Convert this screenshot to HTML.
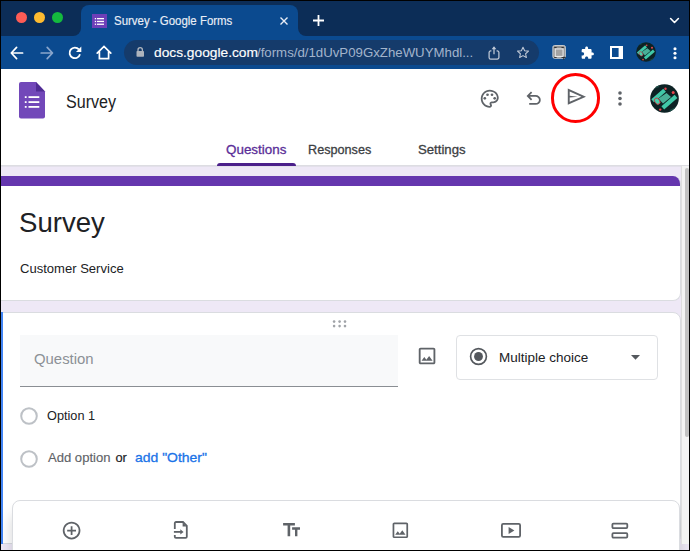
<!DOCTYPE html>
<html><head><meta charset="utf-8">
<style>
*{box-sizing:border-box;margin:0;padding:0}
html,body{width:690px;height:551px;overflow:hidden;background:#000;font-family:"Liberation Sans",sans-serif}
.a{position:absolute}
.t{position:absolute;white-space:nowrap;line-height:1}
svg{position:absolute;overflow:visible}
</style></head><body>
<svg width="0" height="0" style="position:absolute"><defs><symbol id="av" viewBox="0 0 29 29"><clipPath id="avc"><circle cx="14.5" cy="14.5" r="14.3"/></clipPath><g clip-path="url(#avc)"><rect width="29" height="29" fill="#0d2224"/><path d="M3 4L9 2M20 27L26 24" stroke="#1b4a45" stroke-width="2"/><path d="M8.5 14.5L16.5 9L21 13L13 19.5Z" fill="#55c9ad" opacity=".85"/><path d="M2.6 16.8L14.6 6.3" stroke="#40c8a8" stroke-width="4"/><path d="M12.8 23.8L26 12.4" stroke="#40c8a8" stroke-width="4.2"/><ellipse cx="7.2" cy="17.2" rx="2.4" ry="3.4" transform="rotate(-35 7.2 17.2)" fill="#48d0ae" stroke="#c8404a" stroke-width="0.9"/><circle cx="15.5" cy="4.8" r="1.2" fill="#e8454c"/><circle cx="23.2" cy="8.4" r="1.5" fill="#e8454c"/><circle cx="10.2" cy="25.6" r="1.2" fill="#e8454c"/></g></symbol></defs></svg>
<!-- titlebar -->
<div class="a" style="left:1px;top:1px;width:688px;height:35px;background:#0c2d57"></div>
<div class="a" style="left:16.1px;top:11.8px;width:11px;height:11px;border-radius:50%;background:#fd5c56"></div>
<div class="a" style="left:34.2px;top:11.8px;width:11px;height:11px;border-radius:50%;background:#febb30"></div>
<div class="a" style="left:52.2px;top:11.8px;width:11px;height:11px;border-radius:50%;background:#14ba3e"></div>
<!-- active tab -->
<div class="a" style="left:81px;top:5px;width:217px;height:31px;background:#0b4a8f;border-radius:8px 8px 0 0"></div>
<div class="a" style="left:73px;top:28px;width:8px;height:8px;background:#0b4a8f"></div>
<div class="a" style="left:73px;top:20px;width:8px;height:16px;background:#0c2d57;border-radius:0 0 8px 0"></div>
<div class="a" style="left:298px;top:28px;width:8px;height:8px;background:#0b4a8f"></div>
<div class="a" style="left:298px;top:20px;width:8px;height:16px;background:#0c2d57;border-radius:0 0 0 8px"></div>
<div class="a" style="left:92px;top:13.5px;width:15px;height:14.5px;background:#6e3fb8"></div>
<svg style="left:92px;top:13.5px" width="15" height="15" viewBox="0 0 15 15"><g fill="#fff"><rect x="2.8" y="4" width="1.3" height="1.3"/><rect x="5" y="4" width="7" height="1.3"/><rect x="2.8" y="6.8" width="1.3" height="1.3"/><rect x="5" y="6.8" width="7" height="1.3"/><rect x="2.8" y="9.6" width="1.3" height="1.3"/><rect x="5" y="9.6" width="7" height="1.3"/></g></svg>
<div class="t" style="left:113.5px;top:14.7px;font-size:12.15px;color:#e9eef6;transform:scaleX(0.943);transform-origin:0 0;-webkit-text-stroke:0.15px #e9eef6">Survey - Google Forms</div>
<svg style="left:280px;top:17px" width="8" height="8" viewBox="0 0 8 8"><path d="M0.5 0.5L7.5 7.5M7.5 0.5L0.5 7.5" stroke="#e9eef6" stroke-width="1.4"/></svg>
<svg style="left:313px;top:15px" width="11" height="11" viewBox="0 0 11 11"><path d="M5.5 0V11M0 5.5H11" stroke="#fff" stroke-width="1.8"/></svg>
<svg style="left:669px;top:16px" width="11" height="9" viewBox="0 0 11 9"><path d="M1.6 2.5L5.5 6.5L9.4 2.5" stroke="#fff" stroke-width="1.6" fill="none" stroke-linecap="round" stroke-linejoin="round"/></svg>
<!-- toolbar -->
<div class="a" style="left:1px;top:36px;width:688px;height:34px;background:#0b4a8f"></div>
<svg style="left:10px;top:45.5px" width="14" height="14" viewBox="0 0 14 14"><path d="M12.6 7H1.6M6.6 1.4L1.3 7L6.6 12.6" stroke="#fff" stroke-width="1.7" fill="none" stroke-linecap="round" stroke-linejoin="round"/></svg>
<svg style="left:39.5px;top:45.5px" width="14" height="14" viewBox="0 0 14 14"><path d="M1.2 7H12.2M7.2 1.4L12.5 7L7.2 12.6" stroke="#8aa6cc" stroke-width="1.7" fill="none" stroke-linecap="round" stroke-linejoin="round"/></svg>
<svg style="left:68px;top:45.5px" width="14" height="14" viewBox="0 0 14 14"><path d="M12 8.3A5.3 5.3 0 1 1 10.9 3.4" stroke="#fff" stroke-width="1.8" fill="none"/><path d="M13.3 0.6V5.9H8z" fill="#fff"/></svg>
<svg style="left:96px;top:45px" width="16" height="15" viewBox="0 0 16 15"><path d="M1.2 8.2L8 1.5L14.8 8.2M3.4 6.6V13.6H12.6V6.6" stroke="#fff" stroke-width="1.7" fill="none" stroke-linecap="round" stroke-linejoin="miter"/></svg>
<div class="a" style="left:124px;top:40px;width:415px;height:25px;border-radius:13px;background:#153b6b"></div>
<svg style="left:136px;top:47px" width="9" height="10" viewBox="0 0 9 10"><path d="M2 4.4V2.9A2.2 2.2 0 0 1 6.4 2.9V4.4" stroke="#aeb4bd" stroke-width="1.3" fill="none"/><rect x="0.5" y="3.9" width="7.5" height="5.8" rx="0.8" fill="#aeb4bd"/></svg>
<div class="t" style="left:154.05px;top:45.6px;font-size:13px;color:#fff;transform:scaleX(1.058);transform-origin:0 0;-webkit-text-stroke:0.15px #fff">docs.google.com</div>
<div class="t" style="left:257.2px;top:45.6px;font-size:13px;color:#a3b4cb;transform:scaleX(1.018);transform-origin:0 0">/forms/d/1dUvP09GxZheWUYMhdl...</div>
<svg style="left:488px;top:45px" width="12" height="15" viewBox="0 0 12 15"><path d="M3.4 5.9H2.7A1.6 1.6 0 0 0 1.1 7.5V12.4A1.6 1.6 0 0 0 2.7 14H9.3A1.6 1.6 0 0 0 10.9 12.4V7.5A1.6 1.6 0 0 0 9.3 5.9H8.6" stroke="#bfc8d6" stroke-width="1.25" fill="none"/><path d="M6 9.2V2.6" stroke="#bfc8d6" stroke-width="1.25"/><path d="M3.6 4.2L6 1.3L8.4 4.2z" fill="#bfc8d6"/></svg>
<svg style="left:516px;top:46px" width="14" height="13" viewBox="0 0 24 23"><path d="M12 2.2l2.9 6.2 6.8.7-5.1 4.6 1.4 6.7L12 17l-6 3.4 1.4-6.7L2.3 9.1l6.8-.7z" stroke="#bfc8d6" stroke-width="1.9" fill="none" stroke-linejoin="round"/></svg>
<!-- extensions -->
<svg style="left:551px;top:44px" width="16" height="17" viewBox="0 0 16 17"><rect x="1.9" y="1.6" width="12.4" height="12.6" rx="1.5" fill="#8c8c8c" stroke="#d5d5d5" stroke-width="1"/><g fill="#2a2a2a"><rect x="3.2" y="3" width="2.4" height="0.9"/><rect x="10.5" y="3" width="2.3" height="0.9"/><rect x="3.2" y="13.1" width="2.4" height="0.9"/><rect x="10.5" y="13.1" width="4.2" height="0.9"/><rect x="12.3" y="12.3" width="0.9" height="3.5"/></g><rect x="4.2" y="4.9" width="7.9" height="7.5" fill="#a3a3a3" stroke="#f2f2f2" stroke-width="1"/></svg>
<svg style="left:580px;top:45.5px" width="15" height="14" viewBox="0 0 24 24"><path d="M20.5 11H19V7c0-1.1-.9-2-2-2h-4V3.5C13 2.12 11.88 1 10.5 1S8 2.12 8 3.5V5H4c-1.1 0-1.99.9-1.99 2v3.8H3.5c1.49 0 2.7 1.21 2.7 2.7s-1.21 2.7-2.7 2.7H2V20c0 1.1.9 2 2 2h3.8v-1.5c0-1.49 1.21-2.7 2.7-2.7 1.49 0 2.7 1.21 2.7 2.7V22H17c1.1 0 2-.9 2-2v-4h1.5c1.38 0 2.5-1.12 2.5-2.5S21.88 11 20.5 11z" fill="#fff"/></svg>
<svg style="left:610px;top:46px" width="13" height="13" viewBox="0 0 13 13"><rect x="1" y="1" width="11" height="11" stroke="#fff" stroke-width="2" fill="none"/><rect x="8.6" y="1" width="3.4" height="11" fill="#fff"/></svg>
<svg style="left:636px;top:42.3px" width="20" height="20" viewBox="0 0 29 29"><use href="#av"/></svg>
<svg style="left:673px;top:46.5px" width="4" height="13" viewBox="0 0 4 13"><circle cx="2" cy="1.8" r="1.55" fill="#fff"/><circle cx="2" cy="6.3" r="1.55" fill="#fff"/><circle cx="2" cy="10.8" r="1.55" fill="#fff"/></svg>
<!-- page -->
<div class="a" style="left:1px;top:69px;width:688px;height:481px;background:#eee8f6;overflow:hidden">
 <!-- header -->
 <div class="a" style="left:0;top:0;width:688px;height:97px;background:#fff;border-bottom:1px solid #dddde2;box-shadow:0 1px 0 #e3e0ea"></div>
</div>
<!-- forms icon -->
<svg style="left:18.7px;top:82px" width="26" height="36.5" viewBox="0 0 26 36.5"><path d="M2 0H17L26 9.5V34.5A2 2 0 0 1 24 36.5H2A2 2 0 0 1 0 34.5V2A2 2 0 0 1 2 0z" fill="#7248b9"/><path d="M17 0L26 9.5H17z" fill="#4f2c93"/><g fill="#fff"><rect x="5.8" y="14.2" width="1.8" height="1.8"/><rect x="9.5" y="14.2" width="10.8" height="1.8"/><rect x="5.8" y="19.2" width="1.8" height="1.8"/><rect x="9.5" y="19.2" width="10.8" height="1.8"/><rect x="5.8" y="24" width="1.8" height="1.8"/><rect x="9.5" y="24" width="10.8" height="1.8"/></g></svg>
<div class="t" style="left:65.9px;top:94.1px;font-size:17.46px;color:#202124;transform:scaleX(0.923);transform-origin:0 0">Survey</div>
<!-- header right icons -->
<svg style="left:479.3px;top:87.7px" width="21.5" height="21.5" viewBox="0 0 24 24"><path d="M12 22C6.49 22 2 17.51 2 12S6.49 2 12 2s10 4.04 10 9c0 3.31-2.69 6-6 6h-1.77c-.28 0-.5.22-.5.5 0 .12.05.23.13.33.41.47.64 1.06.64 1.67 0 1.38-1.12 2.5-2.5 2.5zm0-18c-4.41 0-8 3.59-8 8s3.59 8 8 8c.28 0 .5-.22.5-.5 0-.16-.08-.28-.14-.35-.41-.46-.63-1.05-.63-1.65 0-1.38 1.12-2.5 2.5-2.5H16c2.21 0 4-1.79 4-4 0-3.86-3.59-7-8-7z" fill="#5f6368"/><circle cx="6.5" cy="11.5" r="1.5" fill="#5f6368"/><circle cx="9.5" cy="7.5" r="1.5" fill="#5f6368"/><circle cx="14.5" cy="7.5" r="1.5" fill="#5f6368"/><circle cx="17.5" cy="11.5" r="1.5" fill="#5f6368"/></svg>
<svg style="left:523.05px;top:87.85px" width="21.3" height="21.3" viewBox="0 -960 960 960"><path d="M280-200v-80h284q63 0 109.5-40T720-420q0-60-46.5-100T564-560H312l104 104-56 56-200-200 200-200 56 56-104 104h252q97 0 166.5 63T800-420q0 94-69.5 157T564-200H280Z" fill="#5f6368"/></svg>
<svg style="left:566px;top:86px" width="22" height="22" viewBox="0 0 22 22"><path d="M1.8 2.5L20 10.65L1.8 18.8Z M3.7 5.43L15.43 10.65L3.7 15.87Z M3.7 9.8L11.8 10.65L3.7 11.5Z" fill="#5f6368" fill-rule="evenodd"/></svg>
<div class="a" style="left:550.5px;top:73.2px;width:49.5px;height:49.5px;border-radius:50%;border:3.2px solid #f00"></div>
<svg style="left:618px;top:91px" width="4" height="15" viewBox="0 0 4 15"><circle cx="2" cy="2" r="1.8" fill="#5f6368"/><circle cx="2" cy="7.5" r="1.8" fill="#5f6368"/><circle cx="2" cy="13" r="1.8" fill="#5f6368"/></svg>
<svg style="left:649.5px;top:84px" width="29" height="29" viewBox="0 0 29 29"><use href="#av"/></svg>
<!-- tabs -->
<div class="t" style="left:226.1px;top:143px;font-size:13.13px;color:#5a2e98;transform:scaleX(1.021);transform-origin:0 0;-webkit-text-stroke:0.3px #5a2e98">Questions</div>
<div class="a" style="left:217px;top:162.8px;width:79px;height:3px;background:#4b1f8a;border-radius:3px 3px 0 0"></div>
<div class="t" style="left:308.2px;top:143px;font-size:13.13px;color:#3c4043;transform:scaleX(0.963);transform-origin:0 0;-webkit-text-stroke:0.3px #3c4043">Responses</div>
<div class="t" style="left:417.8px;top:143px;font-size:13.13px;color:#3c4043;transform:scaleX(1.003);transform-origin:0 0;-webkit-text-stroke:0.3px #3c4043">Settings</div>
<!-- title card -->
<div class="a" style="left:-9px;top:176px;width:690px;height:125px;background:#fff;border:1px solid #dadce0;border-top:0;border-radius:8px;overflow:hidden">
 <div class="a" style="left:-1px;top:0;width:692px;height:9.5px;background:#6536ae"></div>
</div>
<div class="t" style="left:19.4px;top:209px;font-size:27.93px;color:#202124;transform:scaleX(0.987);transform-origin:0 0">Survey</div>
<div class="t" style="left:19.75px;top:262.05px;font-size:13.41px;color:#202124;transform:scaleX(0.973);transform-origin:0 0">Customer Service</div>
<!-- question card -->
<div class="a" style="left:-9px;top:312px;width:690px;height:232px;background:#fff;border:1px solid #dadce0;border-radius:8px"></div>
<div class="a" style="left:1px;top:312px;width:2px;height:232px;background:#4285f4"></div>
<svg style="left:332px;top:320px" width="15" height="8" viewBox="0 0 15 8"><g fill="#a0a3a8"><circle cx="2.1" cy="1.6" r="1.3"/><circle cx="7.6" cy="1.6" r="1.3"/><circle cx="13" cy="1.6" r="1.3"/><circle cx="2.1" cy="6.1" r="1.3"/><circle cx="7.6" cy="6.1" r="1.3"/><circle cx="13" cy="6.1" r="1.3"/></g></svg>
<div class="a" style="left:20px;top:334.5px;width:378px;height:52.3px;background:#f8f9fa;border-bottom:1px solid #8a8e93"></div>
<div class="t" style="left:33.95px;top:352px;font-size:14.53px;color:#8c9196;transform:scaleX(1.026);transform-origin:0 0">Question</div>
<svg style="left:415.8px;top:345.2px" width="22.1" height="22.1" viewBox="0 -960 960 960"><path d="M200-120q-33 0-56.5-23.5T120-200v-560q0-33 23.5-56.5T200-840h560q33 0 56.5 23.5T840-760v560q0 33-23.5 56.5T760-120H200Zm0-80h560v-560H200v560Zm40-80h480L570-480 450-320l-90-120-120 160Zm-40 80v-560 560Z" fill="#5f6368"/></svg>
<div class="a" style="left:456px;top:335px;width:201.5px;height:45px;border:1px solid #dfe1e4;border-radius:4px"></div>
<svg style="left:468.8px;top:346.6px" width="19" height="19" viewBox="0 0 24 24"><circle cx="12" cy="12" r="10" stroke="#54585d" stroke-width="2.1" fill="none"/><circle cx="12" cy="12" r="5.6" fill="#54585d"/></svg>
<div class="t" style="left:499.3px;top:350.65px;font-size:13.41px;color:#202124;transform:scaleX(1.007);transform-origin:0 0">Multiple choice</div>
<svg style="left:631.4px;top:355px" width="9" height="5" viewBox="0 0 9 5"><path d="M0 0H9L4.5 4.8z" fill="#54585d"/></svg>
<svg style="left:20px;top:406.5px" width="18" height="18" viewBox="0 0 18 18"><circle cx="9" cy="9" r="7.8" stroke="#bdc1c6" stroke-width="2" fill="none"/></svg>
<div class="t" style="left:46.76px;top:409px;font-size:13.7px;color:#202124;transform:scaleX(0.930);transform-origin:0 0">Option 1</div>
<svg style="left:20px;top:449.5px" width="18" height="18" viewBox="0 0 18 18"><circle cx="9" cy="9" r="7.8" stroke="#bdc1c6" stroke-width="2" fill="none"/></svg>
<div class="t" style="left:47.5px;top:452px;font-size:12.85px;color:#5f6368;transform:scaleX(1.017);transform-origin:0 0;-webkit-text-stroke:0.15px #5f6368">Add option</div>
<div class="t" style="left:115.4px;top:452px;font-size:12.85px;color:#202124;transform:scaleX(1.0);transform-origin:0 0;-webkit-text-stroke:0.2px #202124">or</div>
<div class="t" style="left:134.8px;top:451px;font-size:13.1px;color:#1a73e8;transform:scaleX(1.065);transform-origin:0 0;-webkit-text-stroke:0.3px #1a73e8">add "Other"</div>
<!-- bottom toolbar card -->
<div class="a" style="left:12px;top:500px;width:668px;height:60px;background:#fff;border:1px solid #dadce0;border-radius:8px;box-shadow:0 14px 14px rgba(60,64,67,.22)"></div>
<svg style="left:60.8px;top:519.5px" width="21.2" height="21.2" viewBox="0 -960 960 960"><path d="M440-280h80v-160h160v-80H520v-160h-80v160H280v80h160v160Zm40 200q-83 0-156-31.5T197-197q-54-54-85.5-127T80-480q0-83 31.5-156T197-763q54-54 127-85.5T480-880q83 0 156 31.5T763-763q54 54 85.5 127T880-480q0 83-31.5 156T763-197q-54 54-127 85.5T480-80Zm0-80q134 0 227-93t93-227q0-134-93-227t-227-93q-134 0-227 93t-93 227q0 134 93 227t227 93Zm0-320Z" fill="#5f6368"/></svg>
<svg style="left:172px;top:520px" width="18" height="20" viewBox="0 0 18 20"><path d="M2.8 8.9V3.2A1.2 1.2 0 0 1 4 2H11L14.8 5.8V16.7A1.2 1.2 0 0 1 13.6 17.9H4A1.2 1.2 0 0 1 2.8 16.7V15" stroke="#5f6368" stroke-width="1.8" fill="none"/><path d="M10.6 2.5V6.6H14.6z" fill="#5f6368"/><path d="M1.9 11.9H9" stroke="#5f6368" stroke-width="1.8"/><path d="M8.3 9.2L11.6 11.9L8.3 14.6z" fill="#5f6368"/></svg>
<svg style="left:282px;top:522px" width="19" height="15" viewBox="0 0 19 15"><path d="M1.1 1.1H12.9V3.6H8.2V14.2H5.6V3.6H1.1z M10.1 5.2H18V7.8H15.4V14.2H13V7.8H10.1z" fill="#5f6368"/></svg>
<svg style="left:390.4px;top:519.8px" width="20.7" height="20.7" viewBox="0 -960 960 960"><path d="M200-120q-33 0-56.5-23.5T120-200v-560q0-33 23.5-56.5T200-840h560q33 0 56.5 23.5T840-760v560q0 33-23.5 56.5T760-120H200Zm0-80h560v-560H200v560Zm40-80h480L570-480 450-320l-90-120-120 160Zm-40 80v-560 560Z" fill="#5f6368"/></svg>
<svg style="left:501px;top:522.5px" width="20" height="15" viewBox="0 0 20 15"><rect x="0.9" y="0.9" width="18.2" height="13" rx="1.3" stroke="#5f6368" stroke-width="1.8" fill="none"/><path d="M7.6 4V11L13.4 7.5z" fill="#5f6368"/></svg>
<svg style="left:611px;top:521.5px" width="18" height="17" viewBox="0 0 18 17"><rect x="1.4" y="1.6" width="14.9" height="4.5" rx="1" stroke="#5f6368" stroke-width="1.8" fill="none"/><rect x="1.4" y="11.2" width="14.9" height="4.4" rx="1" stroke="#5f6368" stroke-width="1.8" fill="none"/></svg>
<!-- scrollbar -->
<div class="a" style="left:680.5px;top:166px;width:8.5px;height:378px;background:#f3f3f3;border-left:1px solid #dedede"></div>
<div class="a" style="left:684.5px;top:168px;width:4px;height:269px;background:#c2c2c2;border-radius:2px"></div>
<!-- borders -->
<div class="a" style="left:0;top:550px;width:690px;height:1px;background:#000"></div>
<div class="a" style="left:0;top:0;width:690px;height:1px;background:#000"></div>
<div class="a" style="left:0;top:0;width:1px;height:551px;background:#000"></div>
<div class="a" style="left:689px;top:0;width:1px;height:551px;background:#000"></div>
</body></html>
